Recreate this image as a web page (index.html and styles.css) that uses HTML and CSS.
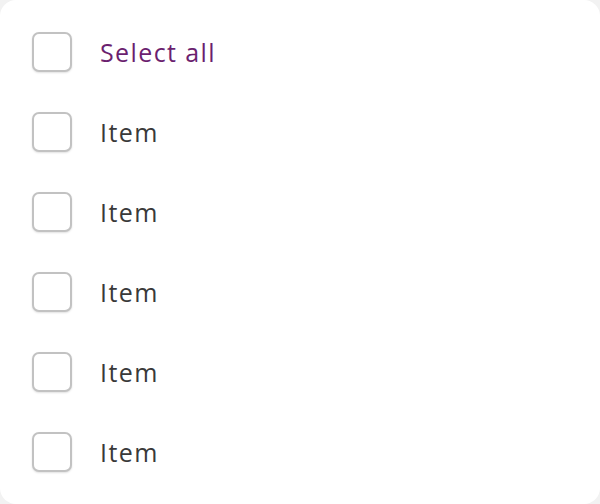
FILE: index.html
```html
<!DOCTYPE html>
<html>
<head>
<meta charset="utf-8">
<link rel="stylesheet" href="styles.css">
</head>
<body>
<div class="card">
  <ul class="list">
    <li class="row"><span class="box"></span><span class="label label-all">Select all</span></li>
    <li class="row"><span class="box"></span><span class="label">Item</span></li>
    <li class="row"><span class="box"></span><span class="label">Item</span></li>
    <li class="row"><span class="box"></span><span class="label">Item</span></li>
    <li class="row"><span class="box"></span><span class="label">Item</span></li>
    <li class="row"><span class="box"></span><span class="label">Item</span></li>
  </ul>
</div>
</body>
</html>
```
FILE: styles.css
```css
html, body {
  margin: 0;
  padding: 0;
  background: #f2f2f2;
}
.card {
  width: 600px;
  height: 504px;
  box-sizing: border-box;
  background: #ffffff;
  border-radius: 16px;
  padding: 32px 32px 0 32px;
}
.list {
  list-style: none;
  margin: 0;
  padding: 0;
  display: flex;
  flex-direction: column;
  gap: 40px;
}
.row {
  display: flex;
  align-items: center;
  height: 40px;
}
.box {
  width: 40px;
  height: 40px;
  box-sizing: border-box;
  border: 2px solid #c2c2c2;
  border-radius: 7px;
  background: #fff;
  box-shadow: 0 1px 2px rgba(0,0,0,0.12);
  flex: none;
}
.label {
  margin-left: 28px;
  font-family: "Open Sans", "Liberation Sans", sans-serif;
  font-size: 25px;
  letter-spacing: 1.4px;
  color: #393939;
  line-height: 40px;
}
.label-all {
  color: #6b1f6f;
}
```
